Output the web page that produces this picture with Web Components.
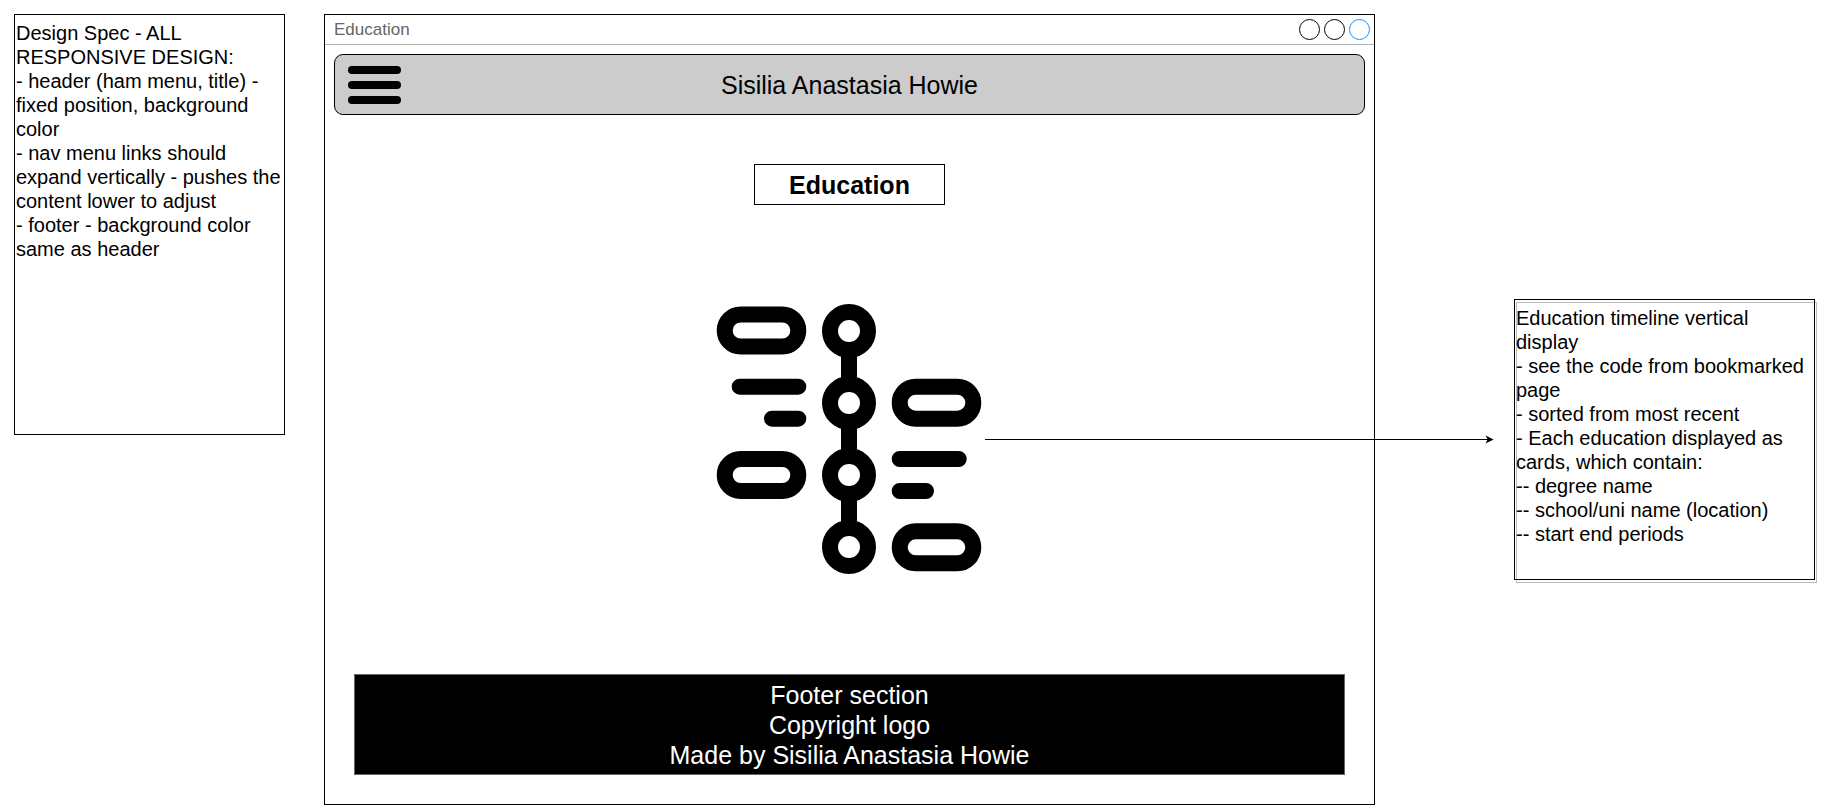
<!DOCTYPE html>
<html lang="en">
<head>
<meta charset="utf-8">
<meta name="viewport" content="width=device-width, initial-scale=1">
<title>Education wireframe</title>
<style>
  body { margin: 0; background: #fff; color: #000; font-family: "Liberation Sans", Arial, sans-serif; }
</style>
</head>
<body>
<wireframe-board>
  <spec-note slot="spec">
    <p>Design Spec - ALL RESPONSIVE DESIGN:</p>
    <p>- header (ham menu, title) - fixed position, background color</p>
    <p>- nav menu links should expand vertically - pushes the content lower to adjust</p>
    <p>- footer - background color same as header</p>
  </spec-note>
  <app-window slot="window" label="Education">
    <site-header>Sisilia Anastasia Howie</site-header>
    <page-heading>Education</page-heading>
    <timeline-row></timeline-row>
    <site-footer>
      <p>Footer section</p>
      <p>Copyright logo</p>
      <p>Made by Sisilia Anastasia Howie</p>
    </site-footer>
  </app-window>
  <spec-note slot="detail" class="stacked">
    <p>Education timeline vertical display</p>
    <p>- see the code from bookmarked page</p>
    <p>- sorted from most recent</p>
    <p>- Each education displayed as cards, which contain:</p>
    <p>-- degree name</p>
    <p>-- school/uni name (location)</p>
    <p>-- start end periods</p>
  </spec-note>
</wireframe-board>

<script>
  const define = (name, html, setup) => {
    const template = document.createElement('template');
    template.innerHTML = html;
    customElements.define(name, class extends HTMLElement {
      constructor() {
        super();
        this.attachShadow({ mode: 'open' }).append(template.content.cloneNode(true));
      }
      connectedCallback() { if (setup) setup(this); }
    });
  };

  define('wireframe-board', `
    <style>
      :host {
        display: grid;
        grid-template-columns: 271fr 39px 1051fr 139px 301fr;
        align-items: start;
        padding: 14px 9px 7px 14px;
      }
      slot[name="window"] { display: block; grid-column: 3; }
      slot[name="spec"] { display: block; grid-column: 1; }
      slot[name="detail"] { display: block; grid-column: 5; padding-top: 285px; }
      ::slotted(spec-note) { min-height: 421px; }
      ::slotted(spec-note.stacked) { min-height: 281px; }
    </style>
    <slot name="spec"></slot>
    <slot name="window"></slot>
    <slot name="detail"></slot>`);

  define('spec-note', `
    <style>
      :host {
        display: block;
        position: relative;
        box-sizing: border-box;
        border: 1px solid #000;
        padding: 6px 1px;
        font-size: 20px;
        line-height: 24px;
      }
      /* grey outline of the copy that lies behind the note */
      :host(.stacked)::before {
        content: "";
        position: absolute;
        inset: 2px -3px -4px 1px;
        border: 1px solid #bbb;
        z-index: -1;
      }
      ::slotted(p) { margin: 0; }
    </style>
    <slot></slot>`);

  define('app-window', `
    <style>
      :host { display: block; border: 1px solid #000; }
      .bar {
        display: flex;
        align-items: center;
        justify-content: space-between;
        height: 29px;
        padding: 0 4px 0 9px;
        border-bottom: 1px solid #b3b3b3;
        color: #666;
        font-size: 17px;
      }
      .controls { display: flex; gap: 4px; }
      button {
        box-sizing: border-box;
        width: 21px;
        height: 21px;
        padding: 0;
        border: 1px solid #000;
        border-radius: 50%;
        background: none;
      }
      button.close { border-color: #1890ff; }
      .content { display: flex; flex-direction: column; padding: 9px 9px 29px; }
    </style>
    <div class="bar">
      <span id="label"></span>
      <div class="controls">
        <button type="button" aria-label="Minimize"></button>
        <button type="button" aria-label="Maximize"></button>
        <button type="button" class="close" aria-label="Close"></button>
      </div>
    </div>
    <div class="content"><slot></slot></div>`,
    host => { host.shadowRoot.getElementById('label').textContent = host.getAttribute('label'); });

  define('site-header', `
    <style>
      :host { display: block; }
      header {
        display: grid;
        grid-template-columns: 1fr auto 1fr;
        align-items: center;
        box-sizing: border-box;
        min-height: 61px;
        padding: 0 13px;
        border: 1px solid #000;
        border-radius: 9px;
        background: #ccc;
        font-size: 25px;
        line-height: 30px;
      }
      button {
        display: grid;
        gap: 7px;
        width: 53px;
        padding: 0;
        border: 0;
        background: none;
      }
      i { height: 8px; border-radius: 4px; background: #000; }
    </style>
    <header>
      <button type="button" aria-label="Menu"><i></i><i></i><i></i></button>
      <span><slot></slot></span>
    </header>`);

  define('page-heading', `
    <style>
      :host { display: block; align-self: center; margin: 49px 0 99px; }
      h1 {
        box-sizing: border-box;
        min-width: 191px;
        margin: 0;
        padding: 5px 8px 4px;
        border: 1px solid #000;
        font-size: 25px;
        line-height: 30px;
        text-align: center;
      }
    </style>
    <h1><slot></slot></h1>`);

  define('timeline-row', `
    <style>
      :host {
        display: grid;
        grid-template-columns: 1fr auto 1fr;
        align-items: center;
      }
      timeline-icon { grid-column: 2; }
      /* the arrow runs out of the window, towards the detail note */
      flow-arrow { width: calc(100% + 129px); }
    </style>
    <timeline-icon></timeline-icon>
    <flow-arrow></flow-arrow>`);

  define('timeline-icon', `
    <style>
      :host, svg { display: block; }
    </style>
    <svg width="271" height="270" viewBox="0 0 271 270" fill="none" stroke="#000" stroke-width="16" stroke-linecap="round" role="img" aria-label="Timeline">
      <path stroke-linecap="butt" d="M135 46v34M135 118v34M135 190v34"/>
      <circle cx="135" cy="27" r="19"/>
      <circle cx="135" cy="99" r="19"/>
      <circle cx="135" cy="171" r="19"/>
      <circle cx="135" cy="243" r="19"/>
      <rect x="10.7" y="10.5" width="73.6" height="32" rx="16"/>
      <rect x="10.7" y="155" width="73.6" height="32" rx="16"/>
      <rect x="185.7" y="82.7" width="73.6" height="32" rx="16"/>
      <rect x="185.7" y="227.3" width="73.6" height="32" rx="16"/>
      <path d="M25.7 82.7H84.3M58 114.7H84.3M185.7 155H244.7M185.7 187H212"/>
    </svg>`);

  define('flow-arrow', `
    <style>
      :host { display: flex; align-items: center; }
      .line { flex: 1; height: 1px; margin-right: -6px; background: #000; }
      svg { display: block; }
    </style>
    <div class="line"></div>
    <svg width="9" height="9" viewBox="0 0 9 9" aria-hidden="true"><path d="M.6.6 8.6 4.5.6 8.4 2.6 4.5Z"/></svg>`);

  define('site-footer', `
    <style>
      :host { display: block; margin: 100px 20px 0; }
      footer {
        box-sizing: border-box;
        min-height: 101px;
        padding: 5px 8px 4px;
        border: 1px solid #666;
        background: #000;
        color: #fff;
        font-size: 25px;
        line-height: 30px;
        text-align: center;
      }
      ::slotted(p) { margin: 0; }
    </style>
    <footer><slot></slot></footer>`);
</script>
</body>
</html>
